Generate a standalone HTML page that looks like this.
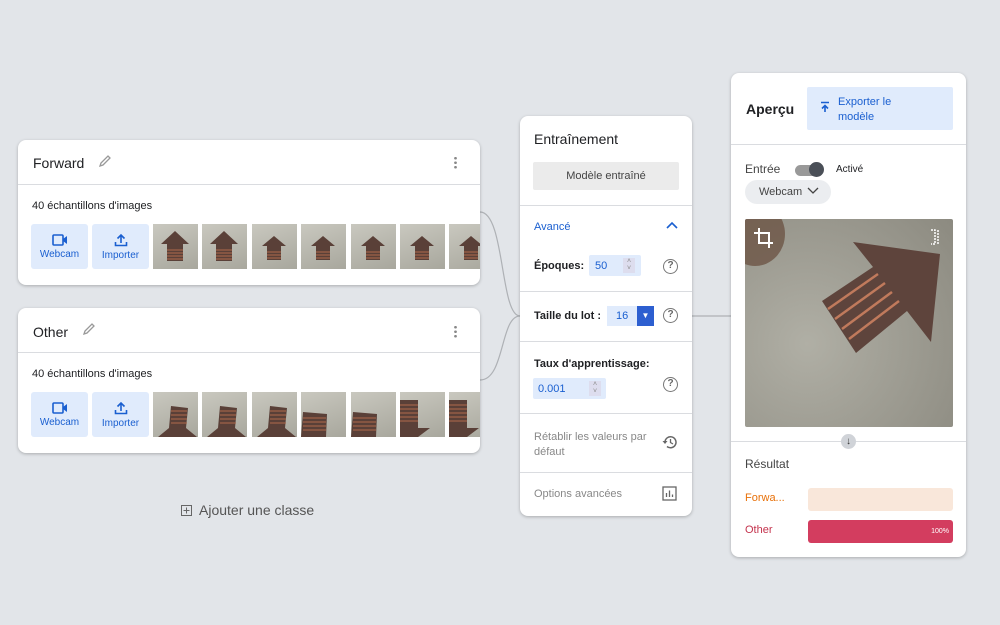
<!DOCTYPE html>
<html><head><meta charset="utf-8"><style>
*{box-sizing:border-box;margin:0;padding:0}
body{width:1000px;height:625px;background:#e2e5e9;font-family:"Liberation Sans",Arial,sans-serif;position:relative;overflow:hidden;color:#202124}
.card{position:absolute;background:#fff;border-radius:8px;box-shadow:0 1px 3px rgba(0,0,0,.25)}
.abs{position:absolute}
.btn{position:absolute;background:#e0ebfc;border-radius:3px;color:#1a5fd0;font-size:10px;text-align:center}
.th{position:absolute;width:45px;height:45px;background:linear-gradient(160deg,#c9c8bf,#a8a79d);overflow:hidden}
.line{position:absolute;height:1px;background:#dadce0}
.help{position:absolute;width:15px;height:15px;border:1.5px solid #777;border-radius:50%;font-size:10px;color:#666;text-align:center;line-height:12px;font-weight:bold}
</style></head><body>
<svg class="abs" style="left:0;top:0" width="1000" height="625"><g fill="none" stroke="#aeb1b5" stroke-width="1.2">
<path d="M480 212 C505 212,500 316,520 316"/><path d="M480 380 C505 380,500 316,520 316"/><path d="M692 316 L731 316"/></g></svg>

<!-- Forward -->
<div class="card" style="left:18px;top:140px;width:462px;height:145px">
<div class="abs" style="left:15px;top:15px;font-size:14px;">Forward</div>
<svg class="abs" style="left:80px;top:14px" width="14" height="14"><path d="M2 12 L3 9 L10 2 L12 4 L5 11 Z" fill="none" stroke="#999" stroke-width="1.3"/></svg>
<div class="abs" style="left:436px;top:16px;width:3px;height:13px;background:radial-gradient(circle,#888 1.2px,transparent 1.5px) 0 0/3px 4.5px"></div>
<div class="line" style="left:0;top:44px;width:462px"></div>
<div class="abs" style="left:14px;top:60px;font-size:11px">40 échantillons d'images</div>
<div class="btn" style="left:13px;top:84px;width:57px;height:45px"><svg style="margin-top:10px" width="16" height="12"><rect x="1" y="1" width="10" height="10" rx="1" fill="none" stroke="#1a5fd0" stroke-width="1.6"/><path d="M11 5 L15 2 L15 10 L11 7Z" fill="#1a5fd0"/></svg><div>Webcam</div></div>
<div class="btn" style="left:74px;top:84px;width:57px;height:45px"><svg style="margin-top:9px" width="14" height="14"><path d="M7 10 V2 M3.5 5.5 L7 2 L10.5 5.5 M1.5 9 V12.5 H12.5 V9" fill="none" stroke="#1a5fd0" stroke-width="1.6"/></svg><div>Importer</div></div>
<div style="position:absolute;left:135px;top:84px;width:327px;height:45px;overflow:hidden">
<div class="th" style="left:0"><svg width="45" height="45"><path d="M8 20 L22 7 L36 20 L30 20 L30 37 L14 37 L14 20Z" fill="#5a4038"/><path d="M14 26H30M14 29H30M14 32H30M14 35H30" stroke="#b06a4c"/></svg></div>
<div class="th" style="left:49px"><svg width="45" height="45"><path d="M8 20 L22 7 L36 20 L30 20 L30 37 L14 37 L14 20Z" fill="#5a4038"/><path d="M14 26H30M14 29H30M14 32H30M14 35H30" stroke="#b06a4c"/></svg></div>
<div class="th" style="left:99px"><svg width="45" height="45"><path d="M10 22 L22 12 L34 22 L29 22 L29 36 L15 36 L15 22Z" fill="#5a4038"/><path d="M15 28H29M15 31H29M15 34H29" stroke="#b06a4c"/></svg></div>
<div class="th" style="left:148px"><svg width="45" height="45"><path d="M10 22 L22 12 L34 22 L29 22 L29 36 L15 36 L15 22Z" fill="#5a4038"/><path d="M15 28H29M15 31H29M15 34H29" stroke="#b06a4c"/></svg></div>
<div class="th" style="left:198px"><svg width="45" height="45"><path d="M10 22 L22 12 L34 22 L29 22 L29 36 L15 36 L15 22Z" fill="#5a4038"/><path d="M15 28H29M15 31H29M15 34H29" stroke="#b06a4c"/></svg></div>
<div class="th" style="left:247px"><svg width="45" height="45"><path d="M10 22 L22 12 L34 22 L29 22 L29 36 L15 36 L15 22Z" fill="#5a4038"/><path d="M15 28H29M15 31H29M15 34H29" stroke="#b06a4c"/></svg></div>
<div class="th" style="left:296px"><svg width="45" height="45"><path d="M10 22 L22 12 L34 22 L29 22 L29 36 L15 36 L15 22Z" fill="#5a4038"/><path d="M15 28H29M15 31H29M15 34H29" stroke="#b06a4c"/></svg></div>
</div></div>

<!-- Other -->
<div class="card" style="left:18px;top:308px;width:462px;height:145px">
<div class="abs" style="left:15px;top:16px;font-size:14px;">Other</div>
<svg class="abs" style="left:64px;top:14px" width="14" height="14"><path d="M2 12 L3 9 L10 2 L12 4 L5 11 Z" fill="none" stroke="#999" stroke-width="1.3"/></svg>
<div class="abs" style="left:436px;top:17px;width:3px;height:13px;background:radial-gradient(circle,#888 1.2px,transparent 1.5px) 0 0/3px 4.5px"></div>
<div class="line" style="left:0;top:44px;width:462px"></div>
<div class="abs" style="left:14px;top:60px;font-size:11px">40 échantillons d'images</div>
<div class="btn" style="left:13px;top:84px;width:57px;height:45px"><svg style="margin-top:10px" width="16" height="12"><rect x="1" y="1" width="10" height="10" rx="1" fill="none" stroke="#1a5fd0" stroke-width="1.6"/><path d="M11 5 L15 2 L15 10 L11 7Z" fill="#1a5fd0"/></svg><div>Webcam</div></div>
<div class="btn" style="left:74px;top:84px;width:57px;height:45px"><svg style="margin-top:9px" width="14" height="14"><path d="M7 10 V2 M3.5 5.5 L7 2 L10.5 5.5 M1.5 9 V12.5 H12.5 V9" fill="none" stroke="#1a5fd0" stroke-width="1.6"/></svg><div>Importer</div></div>
<div style="position:absolute;left:135px;top:84px;width:327px;height:45px;overflow:hidden">
<div class="th" style="left:0"><svg width="45" height="45"><path d="M18 14 L35 16 L33 36 L44 45 L5 45 L16 36Z" fill="#5a4038"/><path d="M18 19H34M18 23H34M18 27H34M18 31H34" stroke="#b06a4c"/></svg></div>
<div class="th" style="left:49px"><svg width="45" height="45"><path d="M18 14 L35 16 L33 36 L44 45 L5 45 L16 36Z" fill="#5a4038"/><path d="M18 19H34M18 23H34M18 27H34M18 31H34" stroke="#b06a4c"/></svg></div>
<div class="th" style="left:99px"><svg width="45" height="45"><path d="M18 14 L35 16 L33 36 L44 45 L5 45 L16 36Z" fill="#5a4038"/><path d="M18 19H34M18 23H34M18 27H34M18 31H34" stroke="#b06a4c"/></svg></div>
<div class="th" style="left:148px"><svg width="45" height="45"><path d="M2 20 L26 22 L25 45 L0 45Z" fill="#5a4038"/><path d="M2 26H25M2 30H25M2 34H25M2 38H25" stroke="#b06a4c"/></svg></div>
<div class="th" style="left:198px"><svg width="45" height="45"><path d="M2 20 L26 22 L25 45 L0 45Z" fill="#5a4038"/><path d="M2 26H25M2 30H25M2 34H25M2 38H25" stroke="#b06a4c"/></svg></div>
<div class="th" style="left:247px"><svg width="45" height="45"><path d="M0 8 L18 8 L18 36 L30 36 L18 45 L0 45Z" fill="#5a4038"/><path d="M0 13H18M0 17H18M0 21H18M0 25H18M0 29H18" stroke="#b06a4c"/></svg></div>
<div class="th" style="left:296px"><svg width="45" height="45"><path d="M0 8 L18 8 L18 36 L30 36 L18 45 L0 45Z" fill="#5a4038"/><path d="M0 13H18M0 17H18M0 21H18M0 25H18M0 29H18" stroke="#b06a4c"/></svg></div>
</div></div>

<div class="abs" style="left:181px;top:502px;font-size:14px;color:#555;display:flex;align-items:center;gap:7px"><svg width="11" height="11"><rect x=".5" y=".5" width="10" height="10" fill="none" stroke="#666"/><path d="M5.5 2.5V8.5M2.5 5.5H8.5" stroke="#666"/></svg>Ajouter une classe</div>

<!-- Training -->
<div class="card" style="left:520px;top:116px;width:172px;height:400px">
<div class="abs" style="left:14px;top:15px;font-size:14px">Entraînement</div>
<div class="abs" style="left:13px;top:46px;width:146px;height:28px;background:#ebebeb;border-radius:2px;font-size:11px;color:#444;text-align:center;line-height:28px">Modèle entraîné</div>
<div class="line" style="left:0;top:89px;width:172px"></div>
<div class="abs" style="left:14px;top:105px;font-size:11px;color:#1a5fd0">Avancé</div>
<svg class="abs" style="left:146px;top:105px" width="12" height="8"><path d="M1 7 L6 2 L11 7" fill="none" stroke="#1a5fd0" stroke-width="1.6"/></svg>
<div class="abs" style="left:14px;top:144px;font-size:11px;font-weight:bold">Époques:</div>
<div class="abs" style="left:69px;top:139px;width:52px;height:21px;background:#e0ebfc;border-radius:2px;font-size:11px;color:#1a5fd0;padding:5px 0 0 6px">50<span style="position:absolute;left:34px;top:3px;width:12px;height:15px;background:#dde;color:#888;font-size:7px;line-height:7px;text-align:center">˄<br>˅</span></div>
<div class="help" style="left:143px;top:143px">?</div>
<div class="line" style="left:0;top:175px;width:172px"></div>
<div class="abs" style="left:14px;top:194px;font-size:11px;font-weight:bold">Taille du lot :</div>
<div class="abs" style="left:87px;top:190px;width:30px;height:20px;background:#e0ebfc;font-size:11px;color:#1a5fd0;padding:4px 0 0 9px">16</div>
<div class="abs" style="left:117px;top:190px;width:17px;height:20px;background:#2d5fd0;color:#fff;font-size:8px;text-align:center;line-height:20px">▼</div>
<div class="help" style="left:143px;top:192px">?</div>
<div class="line" style="left:0;top:225px;width:172px"></div>
<div class="abs" style="left:14px;top:242px;font-size:11px;font-weight:bold">Taux d'apprentissage:</div>
<div class="abs" style="left:13px;top:262px;width:73px;height:21px;background:#e0ebfc;border-radius:2px;font-size:11px;color:#1a5fd0;padding:5px 0 0 5px">0.001<span style="position:absolute;left:56px;top:3px;width:12px;height:15px;background:#dde;color:#888;font-size:7px;line-height:7px;text-align:center">˄<br>˅</span></div>
<div class="help" style="left:143px;top:261px">?</div>
<div class="line" style="left:0;top:297px;width:172px"></div>
<div class="abs" style="left:14px;top:314px;font-size:11px;color:#888;line-height:15px;width:125px">Rétablir les valeurs par défaut</div>
<svg class="abs" style="left:142px;top:318px" width="16" height="16"><path d="M3 8 A5.5 5.5 0 1 1 5 12.5" fill="none" stroke="#666" stroke-width="1.5"/><path d="M0.5 7 L3 10 L5.5 7" fill="#666"/><path d="M8.5 5 V8.5 L11 10" fill="none" stroke="#666" stroke-width="1.3"/></svg>
<div class="line" style="left:0;top:356px;width:172px"></div>
<div class="abs" style="left:14px;top:372px;font-size:11px;color:#888">Options avancées</div>
<svg class="abs" style="left:142px;top:370px" width="15" height="15"><rect x="1" y="1" width="13" height="13" fill="none" stroke="#666" stroke-width="1.3"/><path d="M4.5 11V7M7.5 11V4.5M10.5 11V8.5" stroke="#666" stroke-width="1.3"/></svg>
</div>

<!-- Preview -->
<div class="card" style="left:731px;top:73px;width:235px;height:484px">
<div class="abs" style="left:15px;top:28px;font-size:14px;font-weight:bold">Aperçu</div>
<div class="abs" style="left:76px;top:14px;width:146px;height:43px;background:#e0ebfc;border-radius:2px;color:#1a5fd0;font-size:11px;padding:8px 0 0 31px;line-height:15px">Exporter le<br>modèle</div>
<svg class="abs" style="left:89px;top:28px" width="10" height="12"><path d="M1 1.5H9M5 11V4.5M2 7.5L5 4.5L8 7.5" fill="none" stroke="#1a5fd0" stroke-width="1.6"/></svg>
<div class="line" style="left:0;top:71px;width:235px"></div>
<div class="abs" style="left:14px;top:89px;font-size:12px;color:#444">Entrée</div>
<div class="abs" style="left:64px;top:92px;width:26px;height:11px;background:#999;border-radius:6px"></div>
<div class="abs" style="left:78px;top:89px;width:15px;height:15px;background:#4a4f57;border-radius:50%"></div>
<div class="abs" style="left:105px;top:91px;font-size:10px">Activé</div>
<div class="abs" style="left:14px;top:107px;width:86px;height:24px;background:#ebedf0;border-radius:12px;font-size:11px;color:#444;padding:6px 0 0 14px">Webcam <svg width="12" height="8" style="margin-left:2px"><path d="M1 1L6 6L11 1" fill="none" stroke="#444" stroke-width="1.3"/></svg></div>
<div class="abs" style="left:14px;top:146px;width:208px;height:208px;background:radial-gradient(circle at 30% 60%,#b0afa5,#8c8a80);overflow:hidden;border-radius:2px">
<svg width="208" height="208"><ellipse cx="10" cy="15" rx="30" ry="32" fill="#6a5040" opacity=".75"/>
<path d="M108 23 L195 35 L186 123 L162 92 L111 134 L77 82 L128 48 Z" fill="#5e443c"/>
<g stroke="#c07a5c" stroke-width="2.5"><path d="M83 90 L133 55"/><path d="M90 100 L140 64"/><path d="M97 110 L147 73"/><path d="M104 120 L154 82"/></g>
<path d="M14 9V24H28M9 14H24V29" fill="none" stroke="#fff" stroke-width="2"/><path d="M186 11H190V25H186M193 11V25" fill="none" stroke="#fff" stroke-width="1.5" stroke-dasharray="2 1"/></svg></div>
<div class="line" style="left:0;top:368px;width:235px"></div>
<div class="abs" style="left:110px;top:361px;width:15px;height:15px;background:#d0d3d8;border-radius:50%;font-size:10px;text-align:center;line-height:15px;color:#333">↓</div>
<div class="abs" style="left:14px;top:384px;font-size:12px;color:#444">Résultat</div>
<div class="abs" style="left:14px;top:419px;font-size:11px;color:#e8710a">Forwa...</div>
<div class="abs" style="left:77px;top:415px;width:145px;height:23px;background:#f9e7da;border-radius:3px"></div>
<div class="abs" style="left:14px;top:451px;font-size:11px;color:#c4334d">Other</div>
<div class="abs" style="left:77px;top:447px;width:145px;height:23px;background:#d33d5f;border-radius:3px;color:#fff;font-size:7px;text-align:right;padding:8px 4px 0 0">100%</div>
</div>
</body></html>
